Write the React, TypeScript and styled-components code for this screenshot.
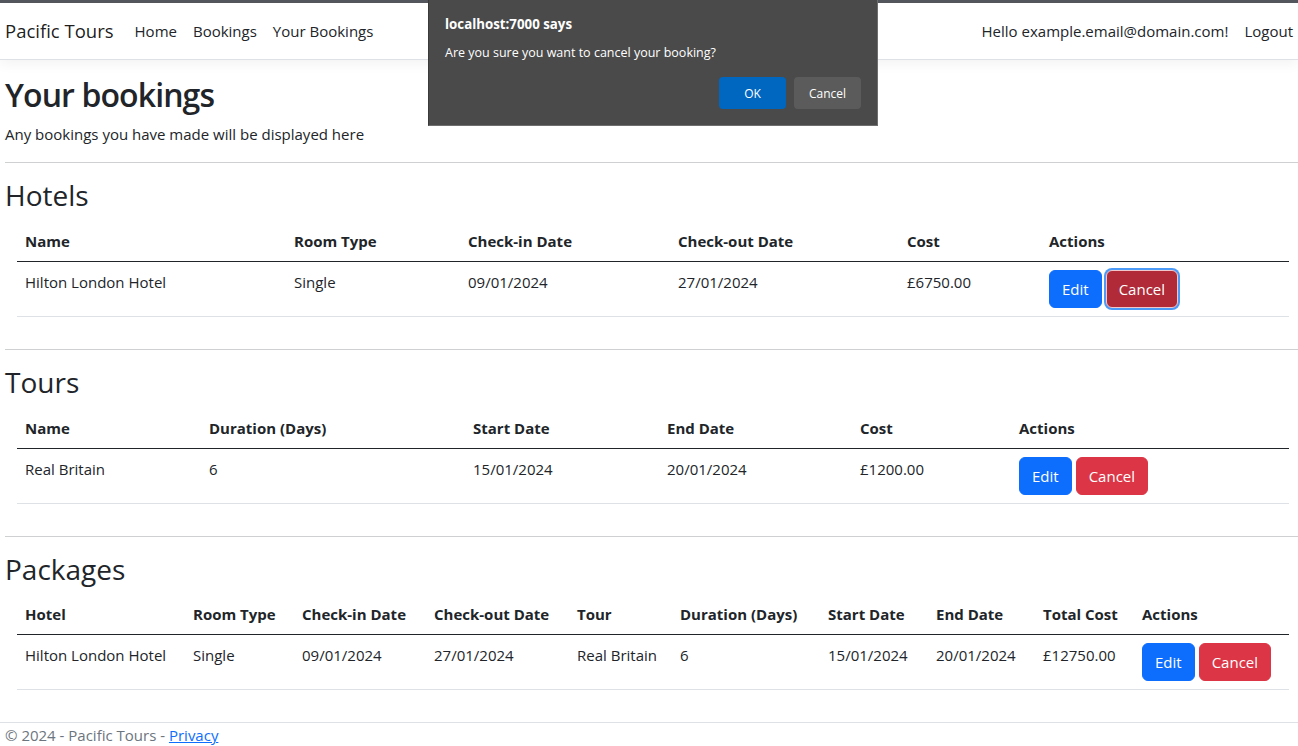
import React from "react";
import styled, { createGlobalStyle } from "styled-components";

const Global = createGlobalStyle`
  *, *::before, *::after { box-sizing: border-box; }
  html, body { margin: 0; padding: 0; }
  body {
    font-family: "Open Sans", "Noto Sans", sans-serif;
    font-size: 15px;
    line-height: 24px;
    color: #212529;
    background: #fff;
    overflow: hidden;
  }
`;

const TopStrip = styled.div`
  height: 3px;
  background: #54575d;
`;

const Navbar = styled.nav`
  display: flex;
  align-items: center;
  height: 57px;
  padding: 8px 5px 8px 5px;
  border-bottom: 1px solid #dee2e6;
  box-shadow: 0 4px 12px rgba(0, 0, 0, 0.05);
  margin-bottom: 16px;
`;

const Brand = styled.a`
  font-size: 18.5px;
  line-height: 30px;
  color: rgba(0, 0, 0, 0.9);
  margin-right: 13px;
  text-decoration: none;
`;

const NavList = styled.div<{ $end?: boolean }>`
  display: flex;
  align-items: center;
  margin-left: ${(p) => (p.$end ? "auto" : "0")};
`;

const NavLink = styled.a<{ $last?: boolean }>`
  display: block;
  padding: 8px ${(p) => (p.$last ? "0" : "8px")} 8px 8px;
  line-height: 24px;
  color: #212529;
  text-decoration: none;
`;

const Main = styled.main`
  padding: 0 0 16px 5px;
`;

const H2 = styled.h2`
  margin: 0 0 8px;
  font-size: 32px;
  font-weight: 600;
  line-height: 38.4px;
  letter-spacing: -0.9px;
`;

const Lead = styled.p`
  margin: 0 0 16px;
`;

const Rule = styled.hr`
  margin: 16px 0;
  border: 0;
  border-top: 1px solid #cfd0d1;
`;

const H3 = styled.h3`
  margin: 0 0 8px;
  font-size: 28px;
  font-weight: 500;
  line-height: 33.6px;
`;

const TableWrap = styled.div`
  display: flow-root;
`;

const Table = styled.table`
  width: 1272px;
  margin: 0 9px 16px 12px;
  border-collapse: collapse;
  table-layout: fixed;
`;

const Th = styled.th`
  text-align: left;
  font-weight: 700;
  padding: 8px;
  line-height: 24px;
  white-space: nowrap;
  border-bottom: 1px solid #212529;
  vertical-align: bottom;
`;

const Td = styled.td`
  padding: 8px;
  line-height: 24px;
  white-space: nowrap;
  vertical-align: top;
  border-bottom: 1px solid #dee2e6;
`;

const Btn = styled.button<{ $variant: "primary" | "danger"; $focused?: boolean }>`
  display: inline-block;
  font-family: inherit;
  font-size: 15px;
  line-height: 24px;
  padding: 6px 12px;
  border-radius: 6px;
  border: 1px solid ${(p) => (p.$variant === "primary" ? "#0d6efd" : p.$focused ? "#b02a37" : "#dc3545")};
  background: ${(p) => (p.$variant === "primary" ? "#0d6efd" : p.$focused ? "#b02a37" : "#dc3545")};
  color: #fff;
  margin-right: 4px;
  cursor: pointer;
  ${(p) => (p.$focused ? `border-color: #f2c7cb; box-shadow: 0 0 0 2px #4b9af7;` : "")}
`;

const Footer = styled.footer`
  border-top: 1px solid #dee2e6;
  padding-left: 5px;
  line-height: 24px;
  color: #6c757d;
`;

const FooterLink = styled.a`
  color: #0d6efd;
  text-decoration: underline;
`;

const Dialog = styled.div`
  position: fixed;
  top: 0;
  left: 428px;
  width: 450px;
  height: 126px;
  background: #4a4a4a;
  border-right: 1px solid #6e6e6e;
  border-bottom: 1px solid #6e6e6e;
  border-left: 1px solid #3a3a3a;
  color: #fff;
  padding: 15px 16px 0 16px;
  font-family: "Open Sans", "Noto Sans", sans-serif;
`;

const DialogTitle = styled.div`
  font-size: 13.3px;
  font-weight: 700;
  line-height: 18px;
`;

const DialogMsg = styled.div`
  font-size: 12.5px;
  line-height: 16px;
  margin-top: 12px;
`;

const DialogActions = styled.div`
  display: flex;
  justify-content: flex-end;
  gap: 8px;
  margin-top: 16px;
`;

const DialogBtn = styled.button<{ $primary?: boolean }>`
  width: 67px;
  height: 32px;
  border: 0;
  border-radius: 4px;
  background: ${(p) => (p.$primary ? "#0067c0" : "#5b5b5b")};
  color: #fff;
  font-family: inherit;
  font-size: 12px;
`;

type Col = { label: string; w: number };

const hotelCols: Col[] = [
  { label: "Name", w: 269 },
  { label: "Room Type", w: 174 },
  { label: "Check-in Date", w: 210 },
  { label: "Check-out Date", w: 229 },
  { label: "Cost", w: 142 },
  { label: "Actions", w: 248 },
];
const tourCols: Col[] = [
  { label: "Name", w: 184 },
  { label: "Duration (Days)", w: 264 },
  { label: "Start Date", w: 194 },
  { label: "End Date", w: 193 },
  { label: "Cost", w: 159 },
  { label: "Actions", w: 278 },
];
const packageCols: Col[] = [
  { label: "Hotel", w: 168 },
  { label: "Room Type", w: 109 },
  { label: "Check-in Date", w: 132 },
  { label: "Check-out Date", w: 143 },
  { label: "Tour", w: 103 },
  { label: "Duration (Days)", w: 148 },
  { label: "Start Date", w: 108 },
  { label: "End Date", w: 107 },
  { label: "Total Cost", w: 99 },
  { label: "Actions", w: 155 },
];

function BookingTable({ cols, row, focused }: { cols: Col[]; row: string[]; focused?: boolean }) {
  return (
    <TableWrap>
      <Table>
        <colgroup>
          {cols.map((c) => (
            <col key={c.label} style={{ width: c.w }} />
          ))}
        </colgroup>
        <thead>
          <tr>
            {cols.map((c) => (
              <Th key={c.label}>{c.label}</Th>
            ))}
          </tr>
        </thead>
        <tbody>
          <tr>
            {row.map((v, i) => (
              <Td key={i}>{v}</Td>
            ))}
            <Td>
              <Btn $variant="primary">Edit</Btn>
              <Btn $variant="danger" $focused={focused}>
                Cancel
              </Btn>
            </Td>
          </tr>
        </tbody>
      </Table>
    </TableWrap>
  );
}

export default function App() {
  return (
    <>
      <Global />
      <TopStrip />
      <Navbar>
        <Brand>Pacific Tours</Brand>
        <NavList>
          <NavLink>Home</NavLink>
          <NavLink>Bookings</NavLink>
          <NavLink>Your Bookings</NavLink>
        </NavList>
        <NavList $end>
          <NavLink>Hello example.email@domain.com!</NavLink>
          <NavLink $last>Logout</NavLink>
        </NavList>
      </Navbar>
      <Main>
        <H2>Your bookings</H2>
        <Lead>Any bookings you have made will be displayed here</Lead>
        <Rule />
        <H3>Hotels</H3>
        <BookingTable
          cols={hotelCols}
          row={["Hilton London Hotel", "Single", "09/01/2024", "27/01/2024", "£6750.00"]}
          focused
        />
        <Rule />
        <H3>Tours</H3>
        <BookingTable
          cols={tourCols}
          row={["Real Britain", "6", "15/01/2024", "20/01/2024", "£1200.00"]}
        />
        <Rule />
        <H3>Packages</H3>
        <BookingTable
          cols={packageCols}
          row={[
            "Hilton London Hotel",
            "Single",
            "09/01/2024",
            "27/01/2024",
            "Real Britain",
            "6",
            "15/01/2024",
            "20/01/2024",
            "£12750.00",
          ]}
        />
      </Main>
      <Footer>
        © 2024 - Pacific Tours - <FooterLink>Privacy</FooterLink>
      </Footer>
      <Dialog role="dialog">
        <DialogTitle>localhost:7000 says</DialogTitle>
        <DialogMsg>Are you sure you want to cancel your booking?</DialogMsg>
        <DialogActions>
          <DialogBtn $primary>OK</DialogBtn>
          <DialogBtn>Cancel</DialogBtn>
        </DialogActions>
      </Dialog>
    </>
  );
}
